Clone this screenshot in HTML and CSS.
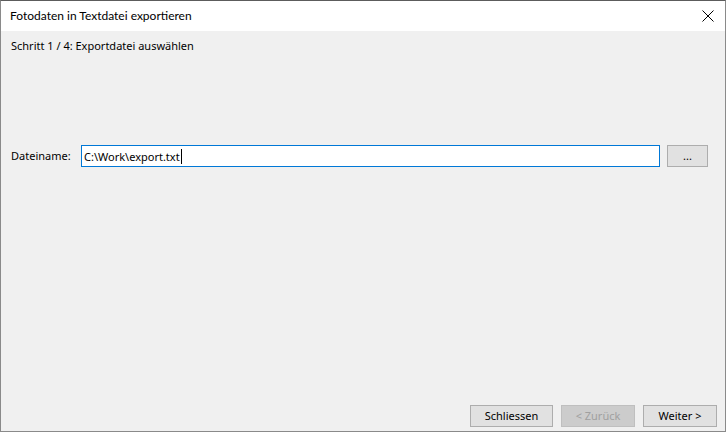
FILE: index.html
```html
<!DOCTYPE html>
<html lang="de">
<head>
<meta charset="utf-8">
<title>Fotodaten in Textdatei exportieren</title>
<link rel="stylesheet" href="styles.css">
</head>
<body>
<div class="window">
  <div class="titlebar">
    <span class="title">Fotodaten in Textdatei exportieren</span>
    <span class="close" aria-label="Schließen">
      <svg width="12" height="12" viewBox="0 0 12 12"><path d="M0.5 0.5 L11.5 11.5 M11.5 0.5 L0.5 11.5" stroke="#000" stroke-width="1" fill="none"/></svg>
    </span>
  </div>
  <div class="content">
    <div class="step">Schritt 1 / 4: Exportdatei auswählen</div>
    <div class="file-row">
      <span class="label">Dateiname:</span>
      <div class="input">C:\Work\export.txt<span class="caret"></span></div>
      <button class="btn btn-browse">...</button>
    </div>
  </div>
  <div class="footer">
    <button class="btn btn-close">Schliessen</button>
    <button class="btn btn-disabled">&lt; Zurück</button>
    <button class="btn btn-next">Weiter &gt;</button>
  </div>
</div>
</body>
</html>
```
FILE: styles.css
```css
html, body {
  margin: 0;
  padding: 0;
}
body {
  font-family: "Noto Sans", "Open Sans", sans-serif;
  font-size: 11px;
  color: #000;
  background: #f0f0f0;
}
.window {
  width: 726px;
  height: 432px;
  box-sizing: border-box;
  border: 1px solid #8a8a8a;
  border-top-color: #5c5c5c;
  background: #f0f0f0;
  display: flex;
  flex-direction: column;
}
.titlebar {
  height: 30px;
  background: #fff;
  display: flex;
  align-items: center;
  justify-content: space-between;
  padding: 0 10px 0 9px;
  flex-shrink: 0;
}
.title {
  font-family: Lato, "Noto Sans", sans-serif;
  font-size: 12px;
  line-height: 16px;
  margin-top: -1px;
}
.close {
  display: flex;
  width: 12px;
  height: 12px;
  margin-right: 1px;
}
.content {
  flex: 1;
  padding: 7px 17px 0 10px;
}
.step {
  line-height: 16px;
  height: 16px;
}
.file-row {
  margin-top: 91px;
  display: flex;
  align-items: center;
  height: 22px;
}
.label {
  width: 70px;
  line-height: 16px;
}
.input {
  box-sizing: border-box;
  width: 579px;
  height: 22px;
  border: 1px solid #0078d7;
  background: #fff;
  padding: 0 2px;
  line-height: 19px;
  display: flex;
  align-items: center;
}
.caret {
  display: inline-block;
  width: 1px;
  height: 15px;
  background: #000;
  margin-left: 1px;
}
.btn {
  box-sizing: border-box;
  font-family: "Noto Sans", "Open Sans", sans-serif;
  font-size: 11px;
  color: #000;
  background: #e1e1e1;
  border: 1px solid #adadad;
  padding: 0;
  margin: 0;
  height: 22px;
  line-height: 18px;
}
.btn-browse {
  width: 41px;
  margin-left: 7px;
}
.footer {
  display: flex;
  justify-content: flex-end;
  gap: 8px;
  padding: 0 8px 4px 0;
  flex-shrink: 0;
}
.btn-close {
  width: 83px;
}
.btn-disabled {
  width: 74px;
  background: #cccccc;
  border-color: #bfbfbf;
  color: #a0a0a0;
}
.btn-next {
  width: 74px;
}
```
